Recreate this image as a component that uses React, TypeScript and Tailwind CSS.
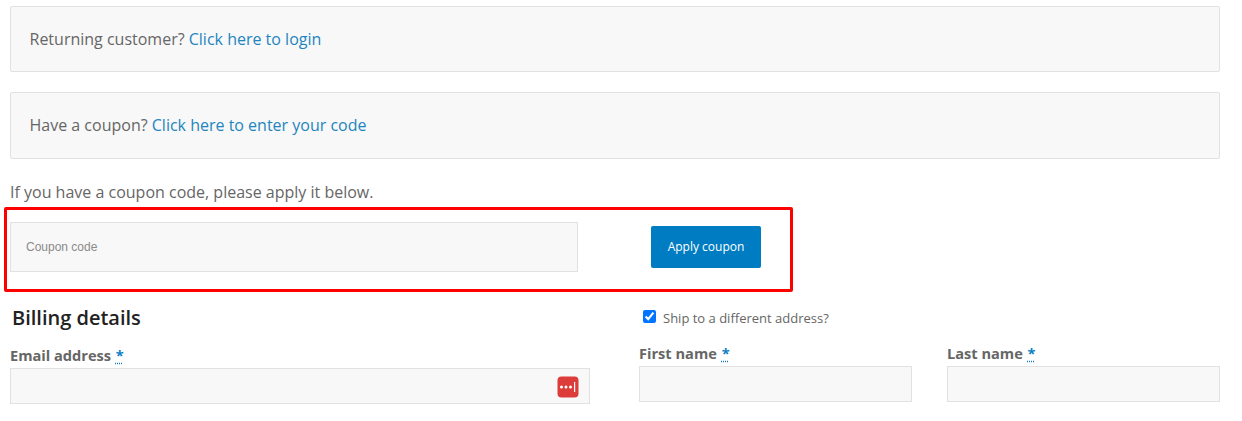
export default function App() {
  const Req = () => (
    <span className="ml-[1px] text-[#0d7fc4] underline decoration-dotted underline-offset-2">*</span>
  );
  return (
    <div className="w-[1242px] h-[421px] overflow-hidden bg-white pt-[6px] pl-[10px] pr-[22px] text-[#666666] font-['Open_Sans',sans-serif]">
      <div className="h-[66px] flex items-center pl-[18.5px] bg-[#f8f8f8] border border-[#e1e1e1] rounded-[2px] text-[16px]">
        <span>Returning customer? <a className="text-[#1e85be]">Click here to login</a></span>
      </div>
      <div className="mt-[20px] h-[67px] flex items-center pl-[18.5px] pb-[2px] bg-[#f8f8f8] border border-[#e1e1e1] rounded-[2px] text-[16px]">
        <span>Have a coupon? <a className="text-[#1e85be]">Click here to enter your code</a></span>
      </div>
      <p className="mt-[22px] h-[22px] leading-[22px] text-[16px]">If you have a coupon code, please apply it below.</p>
      <div className="-ml-[6px] mt-[4px] w-[789px] h-[85px] border-[3px] border-[#ff0000] rounded-[2px] flex items-start pl-[3px] pt-[12px]">
        <div className="w-[568px] h-[50px] flex items-center pl-[15px] bg-[#f8f8f8] border border-[#e1e1e1] font-['Liberation_Sans',sans-serif] text-[12px] text-[#8a8a8a]">
          Coupon code
        </div>
        <button className="ml-[73px] mt-[4px] w-[110px] h-[42px] bg-[#007cc2] rounded-[2px] text-white text-[12px] font-medium">
          Apply coupon
        </button>
      </div>
      <div className="grid grid-cols-[580px_581px] gap-x-[49px]">
        <div>
          <h3 className="mt-[12px] ml-[2px] h-[28px] leading-[28px] text-[20px] font-semibold text-[#222222]">Billing details</h3>
          <label className="block mt-[14px] h-[19px] leading-[19px] text-[14.6px] font-bold text-[#666666]">Email address <Req /></label>
          <div className="relative mt-[3px] h-[36px] bg-[#f8f8f8] border border-[#e1e1e1]">
            <svg className="absolute right-[10px] top-[7px]" width="22" height="22" viewBox="0 0 22 22" aria-hidden="true">
              <rect x="0.5" y="0.5" width="21" height="21" rx="4" fill="#dc3d3a" />
              <circle cx="4.5" cy="11" r="1.5" fill="#fff" />
              <circle cx="9" cy="11" r="1.5" fill="#fff" />
              <circle cx="13.5" cy="11" r="1.5" fill="#fff" />
              <rect x="17" y="6" width="1.2" height="10" fill="#fff" />
            </svg>
          </div>
        </div>
        <div>
          <label className="mt-[18px] ml-[4px] h-[18px] flex items-center text-[13px] text-[#666666]">
            <input type="checkbox" defaultChecked className="m-0 mb-[6px] w-[13px] h-[13px] accent-[#0075ff]" />
            <span className="ml-[7px]">Ship to a different address?</span>
          </label>
          <div className="mt-[16px] grid grid-cols-[273px_273px] gap-x-[35px]">
            <div>
              <label className="block h-[19px] leading-[19px] text-[14.6px] font-bold">First name <Req /></label>
              <div className="mt-[3px] h-[36px] bg-[#f8f8f8] border border-[#e1e1e1]" />
            </div>
            <div>
              <label className="block h-[19px] leading-[19px] text-[14.6px] font-bold">Last name <Req /></label>
              <div className="mt-[3px] h-[36px] bg-[#f8f8f8] border border-[#e1e1e1]" />
            </div>
          </div>
        </div>
      </div>
    </div>
  );
}
